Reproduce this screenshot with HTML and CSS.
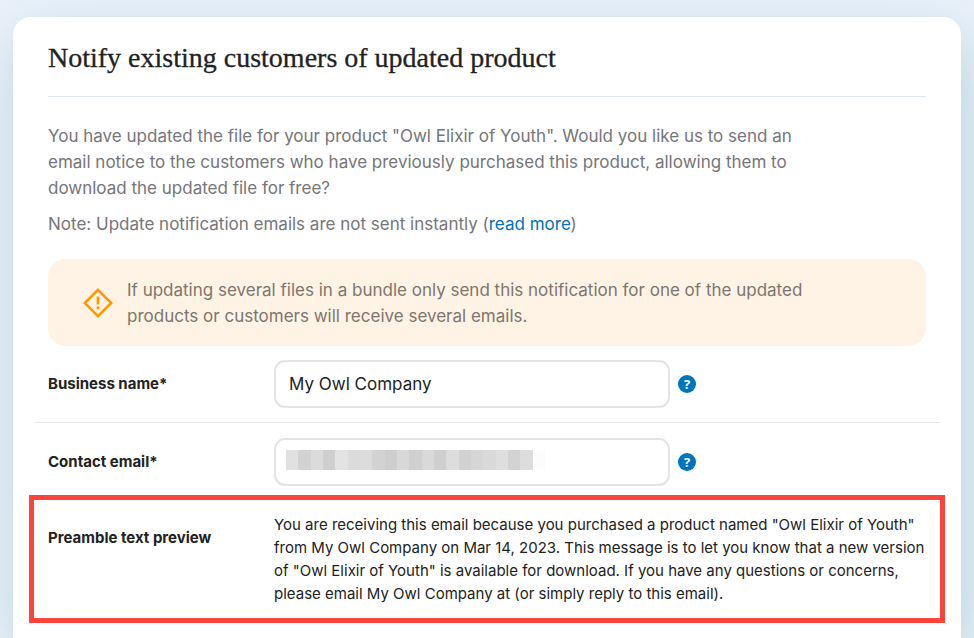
FILE: index.html
```html
<!DOCTYPE html>
<html lang="en">
<head>
<meta charset="utf-8">
<meta name="viewport" content="width=device-width, initial-scale=1">
<title>Notify existing customers of updated product</title>
<link rel="stylesheet" href="styles.css">
</head>
<body>
<main class="card">
  <h1 class="title">Notify existing customers of updated product</h1>
  <p class="lead">You have updated the file for your product "Owl Elixir of Youth". Would you like us to send an<br>email notice to the customers who have previously purchased this product, allowing them to<br>download the updated file for free?</p>
  <p class="lead note">Note: Update notification emails are not sent instantly (<a href="#">read more</a>)</p>
  <div class="alert">
    <svg class="alert-icon" viewBox="0 0 30 30" aria-hidden="true">
      <path d="M15 1.8 28.2 15 15 28.2 1.8 15Z" fill="none" stroke="#ff9800" stroke-width="2.5"/>
      <path d="M15 8.5v8M15 18.6v2.7" fill="none" stroke="#ff9800" stroke-width="2.7"/>
    </svg>
    <p class="alert-text">If updating several files in a bundle only send this notification for one of the updated<br>products or customers will receive several emails.</p>
  </div>
  <form class="form">
    <div class="row divided">
      <label class="label" for="business">Business name*</label>
      <div class="field"><input class="input" id="business" type="text" value="My Owl Company"></div>
      <button class="help" type="button" aria-label="Help with business name">?</button>
    </div>
    <div class="row">
      <label class="label" for="email">Contact email*</label>
      <div class="field">
        <input class="input" id="email" type="email">
        <div class="redacted" aria-hidden="true"></div>
      </div>
      <button class="help" type="button" aria-label="Help with contact email">?</button>
    </div>
    <div class="row highlighted">
      <span class="label">Preamble text preview</span>
      <p class="preview">You are receiving this email because you purchased a product named "Owl Elixir of Youth"<br>from My Owl Company on Mar 14, 2023. This message is to let you know that a new version<br>of "Owl Elixir of Youth" is available for download. If you have any questions or concerns,<br>please email My Owl Company at (or simply reply to this email).</p>
    </div>
  </form>
</main>
</body>
</html>
```
FILE: styles.css
```css
* {
  box-sizing: border-box;
}

body {
  margin: 0;
  padding: 17px 13px 0;
  min-height: 100vh;
  display: flex;
  background: #eaf2fb;
  overflow: hidden;
  color: #222;
  font-family: Inter, "Liberation Sans", sans-serif;
}

.card {
  flex: 1;
  padding: 24px 35px 0;
  background: #fff;
  border-radius: 18px 18px 0 0;
  box-shadow: 5px 20px 60px rgba(110, 160, 175, 0.4);
}

.title {
  margin: 0 0 26px;
  padding-bottom: 21px;
  border-bottom: 1px solid #dfe8ee;
  font: 400 28px/34px "Liberation Serif", serif;
  -webkit-text-stroke: 0.3px #222;
  white-space: nowrap;
}

.lead {
  margin: 0;
  color: #75757a;
  font-size: 17px;
  line-height: 26px;
  white-space: nowrap;
}

.note {
  margin: 10px 0 22px;
}

.lead a {
  color: #0071bc;
  text-decoration: none;
}

.alert {
  display: flex;
  align-items: center;
  gap: 14px;
  min-height: 87px;
  padding: 0 35px;
  background: #fff3e5;
  border-radius: 18px;
}

.alert-icon {
  flex: none;
  width: 30px;
  height: 30px;
}

.alert-text {
  margin: 0;
  color: #7d766e;
  font-size: 17px;
  line-height: 26px;
  white-space: nowrap;
}

.row {
  display: grid;
  grid-template-columns: 226px minmax(0, 396px) 18px;
  align-items: center;
  margin: 0 -14px 0 -13px;
  padding: 14px 14px 9px 13px;
}

.divided {
  padding-bottom: 14px;
  border-bottom: 1px solid #e3e8ef;
}

.divided + .row {
  padding-top: 15px;
}

.label {
  font-size: 15px;
  font-weight: 700;
  line-height: 22px;
  white-space: nowrap;
}

.field {
  position: relative;
}

.input {
  display: block;
  width: 100%;
  height: 48px;
  padding: 0 13px;
  border: 2px solid #e4e4e4;
  border-radius: 11px;
  background: #fff;
  color: #222;
  font: inherit;
  font-size: 17px;
}

.redacted {
  position: absolute;
  left: 12px;
  top: 12px;
  width: 259px;
  height: 20px;
  background: linear-gradient(90deg,
    #e1e1e1 0 12px, #d2d2d2 0 25px, #dbdbdb 0 37px, #cfcfcf 0 49px,
    #e3e3e3 0 62px, #dbdbdb 0 74px, #dcdcdc 0 86px, #d2d2d2 0 99px,
    #cecece 0 111px, #d8d8d8 0 123px, #d0d0d0 0 136px, #d9d9d9 0 148px,
    #cfcfcf 0 160px, #dddddd 0 173px, #d1d1d1 0 185px, #d6d6d6 0 197px,
    #d9d9d9 0 210px, #dedede 0 222px, #d3d3d3 0 234px, #dddddd 0 247px,
    #fcfcfc 0);
}

.help {
  width: 18px;
  height: 18px;
  margin-left: 8px;
  padding: 0;
  border: 0;
  border-radius: 50%;
  background: #0075be;
  color: #fff;
  font: 700 13px/18px "Open Sans", sans-serif;
}

.highlighted {
  grid-template-columns: 226px minmax(0, 1fr);
  align-items: start;
  margin: 0 -19px;
  padding: 13px 14px;
  border: 5px solid #fb453c;
}

.highlighted .label {
  padding-top: 14px;
}

.preview {
  margin: 0;
  font-size: 15px;
  line-height: 23px;
  white-space: nowrap;
}
```
